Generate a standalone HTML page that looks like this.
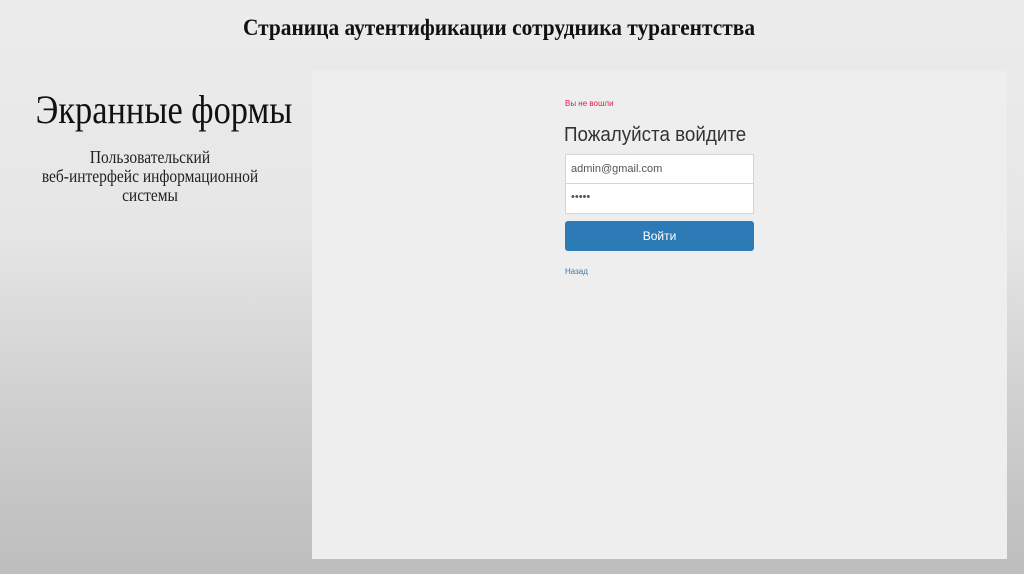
<!DOCTYPE html>
<html><head><meta charset="utf-8"><style>
html,body{margin:0;padding:0}
body{width:1024px;height:574px;position:relative;overflow:hidden;background:linear-gradient(to bottom,#ececec 0%,#e6e6e6 40%,#d0d0d0 70%,#bdbdbd 100%);font-family:"Liberation Serif",serif}
.t{position:absolute;left:0;width:998px;top:15px;text-align:center;font-weight:bold;font-size:23px;color:#111;transform:scaleX(0.93)}
.h{position:absolute;left:14px;width:300px;top:86px;text-align:center;font-size:40px;color:#111;transform:scaleX(0.86)}
.s{position:absolute;left:0;width:300px;top:148px;text-align:center;font-size:18px;line-height:19px;color:#222;transform:scaleX(0.86)}
.p{position:absolute;left:312px;top:71px;width:695px;height:488px;background:#eeeeee}
.f{font-family:"Liberation Sans",sans-serif;position:absolute}
.in{position:absolute;left:565px;background:#fff;border:1px solid #d4d4d4;font-family:"Liberation Sans",sans-serif;font-size:11px;color:#555;line-height:28px;padding-left:5px;box-sizing:border-box;width:189px;height:30px}
</style></head><body>
<div class="t">Страница аутентификации сотрудника турагентства</div>
<div class="h">Экранные формы</div>
<div class="s">Пользовательский<br>веб-интерфейс информационной<br>системы</div>
<div class="p"></div>
<div class="f" style="left:565px;top:99px;font-size:8px;color:#e0204a">Вы не вошли</div>
<div class="f" style="left:564px;top:124px;font-size:20px;color:#333;transform:scaleX(0.94);transform-origin:left">Пожалуйста войдите</div>
<div class="in" style="top:154px">admin@gmail.com</div>
<div class="in" style="top:184px;border-top:none;line-height:26px">•••••</div>
<div class="f" style="left:565px;top:221px;width:189px;height:30px;background:#2c7bb6;border-radius:3px;color:#fff;font-size:12px;text-align:center;line-height:30px">Войти</div>
<div class="f" style="left:565px;top:267px;font-size:8px;color:#3a78b0">Назад</div>
</body></html>
